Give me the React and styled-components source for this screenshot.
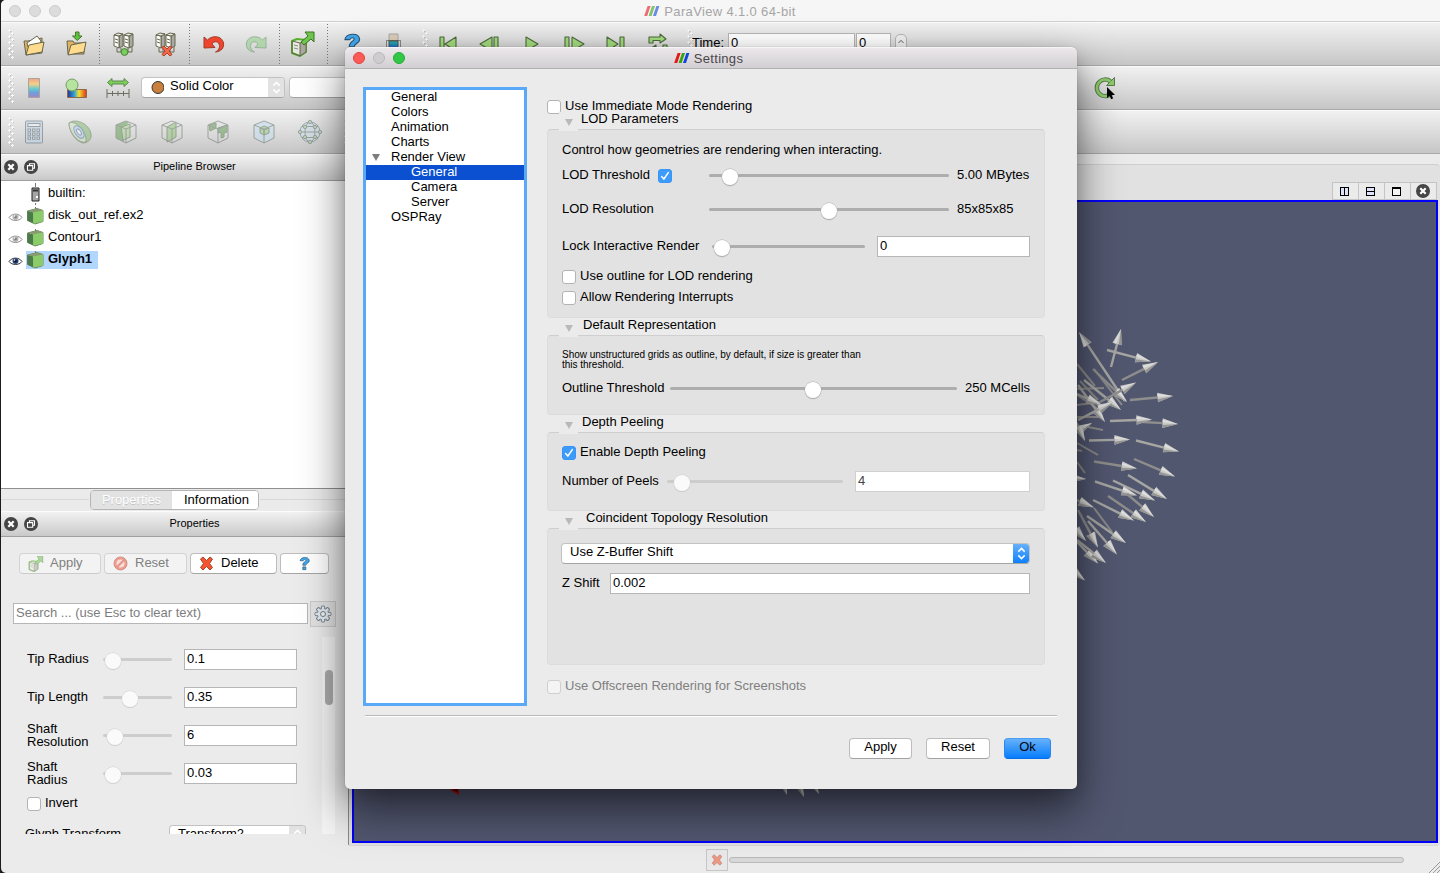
import React from "react";
import styled, { createGlobalStyle, css } from "styled-components";

const GlobalStyle = createGlobalStyle`
  * { box-sizing: border-box; }
  body {
    margin: 0;
    background: #1c1c1c;
    font-family: "Liberation Sans", Arial, sans-serif;
    font-size: 13px;
    line-height: 15px;
    color: #000;
    overflow: hidden;
  }
  svg { display: block; flex: none; }
`;

/* ---------- main window ---------- */
const Desktop = styled.div`
  position: relative;
  width: 1440px;
  height: 873px;
  padding-left: 1px;
  overflow: hidden;
`;
const Window = styled.div`
  display: flex;
  flex-direction: column;
  height: 873px;
  background: #ebebeb;
  border-radius: 5px 0 0 5px;
  overflow: hidden;
`;
const TitleBar = styled.div`
  flex: none;
  display: flex;
  align-items: center;
  height: 22px;
  padding-left: 8px;
  background: #f6f6f6;
  border-bottom: 1px solid #d0d0d0;
`;
const Light = styled.span`
  width: 12px;
  height: 12px;
  margin-right: 8px;
  border-radius: 50%;
  background: ${(p) => p.$c};
  border: 1px solid ${(p) => p.$b};
`;
const TitleText = styled.div`
  flex: 1;
  display: flex;
  justify-content: center;
  gap: 4px;
  padding-top: ${(p) => p.$pt || 0}px;
  padding-right: ${(p) => p.$pad}px;
  color: ${(p) => p.$c};
  letter-spacing: ${(p) => p.$ls || 0}px;
`;
const Toolbar = styled.div`
  flex: none;
  display: flex;
  align-items: center;
  height: 44px;
  background: linear-gradient(#f1f1f1, #dadada 55%, #c6c6c6);
  border-top: 1px solid #fafafa;
  border-bottom: 1px solid #a9a9a9;
`;
const Handle = styled.span`
  flex: none;
  width: 6px;
  height: 30px;
  margin-left: ${(p) => p.$ml ?? 7}px;
  margin-right: ${(p) => p.$mr ?? 0}px;
  background-image: radial-gradient(circle at 1.5px 1.5px, #f8f8f8 1px, transparent 1.4px),
    radial-gradient(circle at 4.5px 4.5px, #f8f8f8 1px, transparent 1.4px),
    radial-gradient(circle at 2.3px 2.3px, #bdbdbd 1px, transparent 1.4px),
    radial-gradient(circle at 5.3px 5.3px, #bdbdbd 1px, transparent 1.4px);
  background-size: 6px 6px;
`;
const ToolButton = styled.span`
  flex: none;
  display: flex;
  justify-content: center;
  align-items: center;
  width: ${(p) => p.$w || 42}px;
  height: 40px;
  margin-left: ${(p) => p.$ml || 0}px;
  opacity: ${(p) => (p.$dim ? 0.5 : 1)};
`;
const Divider = styled.span`
  flex: none;
  width: 1px;
  height: 40px;
  margin: 0 ${(p) => p.$mr ?? 2}px 0 ${(p) => p.$ml ?? 2}px;
  background: repeating-linear-gradient(#777 0 1px, transparent 1px 3px);
`;
const TimeLabel = styled.span`
  width: 36px;
  margin-bottom: 3px;
`;
const Field = styled.div`
  flex: ${(p) => (p.$w ? "none" : 1)};
  width: ${(p) => p.$w}px;
  height: 21px;
  margin-top: ${(p) => p.$mt ?? 2}px;
  margin-left: ${(p) => p.$ml || 0}px;
  padding: 1px 3px 0 2px;
  background: #fff;
  border: 1px solid ${(p) => (p.$dim ? "#d0d0d0" : "#b6b6b6")};
  color: ${(p) => (p.$placeholder ? "#7d7d7d" : p.$dim ? "#444" : "#000")};
`;
const Stepper = styled.span`
  display: flex;
  justify-content: center;
  width: 12px;
  height: 22px;
  margin: 2px 0 0 4px;
  padding-top: 4px;
  border: 1px solid #b5b5b5;
  border-radius: 5px;
  background: #f0f0f0;
`;
const Combo = styled.div`
  flex: ${(p) => (p.$w ? "none" : 1)};
  display: flex;
  align-items: flex-start;
  width: ${(p) => p.$w}px;
  height: 21px;
  margin-top: ${(p) => p.$mt || 0}px;
  margin-left: ${(p) => p.$ml || 0}px;
  padding-left: 8px;
  background: #fff;
  border: 1px solid #c2c2c2;
  border-bottom-color: #a4a4a4;
  border-radius: 4px;
  overflow: hidden;
`;
const ComboText = styled.span`
  flex: 1;
  display: flex;
  gap: 6px;
`;
const ComboArrows = styled.span`
  display: flex;
  align-items: center;
  justify-content: center;
  width: 17px;
  height: 21px;
  margin: -1px -1px -1px 0;
  background: ${(p) => (p.$blue ? "linear-gradient(#6cb3fa, #0a7efd)" : "#e2e2e2")};
`;

const Main = styled.div`
  flex: 1;
  display: flex;
  min-height: 0;
`;
const LeftDock = styled.div`
  flex: none;
  display: flex;
  flex-direction: column;
  width: 344px;
`;
const DockHeader = styled.div`
  flex: none;
  display: flex;
  align-items: center;
  gap: 6px;
  height: ${(p) => p.$h}px;
  padding-left: 3px;
  padding-bottom: ${(p) => p.$pb ?? 1}px;
  background: linear-gradient(#f2f2f2, #c9c9c9);
  border-top: 1px solid #fbfbfb;
  border-bottom: 1px solid #9f9f9f;
  font-size: 11px;
`;
const DockTitle = styled.span`
  flex: 1;
  text-align: center;
  padding-right: ${(p) => p.$pad ?? 0}px;
`;
const Tree = styled.div`
  height: 308px;
  padding-top: 2px;
  background: #fff;
  border-bottom: 1px solid #8f8f8f;
`;
const TreeRow = styled.div`
  display: flex;
  align-items: center;
  height: 22px;
  padding-left: 7px;
`;
const EyeCell = styled.span`
  width: 18px;
  height: 12px;
  padding-top: 2px;
`;
const TreeItem = styled.span`
  display: flex;
  align-items: center;
  gap: 4px;
  height: 18px;
  padding: 0 6px 0 1px;
  ${(p) => p.$selected && css`
    background: #b2d7ff;
    font-weight: bold;
  `}
`;
const TreeText = styled.span`
  margin-bottom: 3px;
`;
const TabRow = styled.div`
  flex: none;
  display: flex;
  align-items: center;
  height: 22px;
`;
const Groove = styled.span`
  width: ${(p) => p.$w}px;
  flex: ${(p) => (p.$w ? "none" : 1)};
  height: 2px;
  border-top: 1px solid #d8d8d8;
`;
const Tabs = styled.div`
  display: flex;
  width: 169px;
  height: 20px;
  margin: 0 1px 0 1px;
  border: 1px solid #b5b5b5;
  border-radius: 4px;
  overflow: hidden;
`;
const Tab = styled.span`
  flex: ${(p) => (p.$on ? "0 0 81px" : 1)};
  height: 19px;
  padding: 1px 0 0 ${(p) => (p.$on ? 0 : 3)}px;
  text-align: center;
  background: ${(p) => (p.$on ? "#e2e2e2" : "#fff")};
  color: ${(p) => (p.$on ? "#fff" : "#000")};
  text-shadow: ${(p) => (p.$on ? "0 1px 0 #c4c4c4" : "none")};
`;
const ActionRow = styled.div`
  flex: none;
  display: flex;
  gap: 3px;
  padding: 16px 0 0 18px;
`;
const Action = styled.span`
  display: flex;
  align-items: center;
  justify-content: ${(p) => (p.$center ? "center" : "flex-start")};
  gap: ${(p) => p.$gap || 6}px;
  width: ${(p) => p.$w}px;
  height: 21px;
  padding: 0 ${(p) => (p.$center ? 0 : 8)}px;
  background: ${(p) => (p.$dim ? "#f3f3f3" : "#fff")};
  color: ${(p) => (p.$dim ? "#808080" : "#000")};
  border: 1px solid ${(p) => (p.$dim ? "#d4d4d4" : "#bdbdbd")};
  border-bottom-color: ${(p) => (p.$dim ? "#cccccc" : "#a6a6a6")};
  border-radius: 4px;
  & > svg { opacity: ${(p) => (p.$dim ? 0.55 : 1)}; }
  & > span { margin-bottom: 3px; }
`;
const SearchRow = styled.div`
  flex: none;
  display: flex;
  align-items: center;
  gap: 2px;
  height: 26px;
  margin: 27px 0 10px;
  padding-left: 12px;
`;
const GearButton = styled.span`
  display: flex;
  align-items: center;
  justify-content: center;
  width: 26px;
  height: 26px;
  background: #e2e2e2;
  border: 1px solid #cacaca;
`;
const ScrollArea = styled.div`
  flex: none;
  display: flex;
  height: 197px;
  overflow: hidden;
`;
const Props = styled.div`
  width: 321px;
  padding: 3px 0 0 26px;
`;
const PropRow = styled.div`
  display: flex;
  align-items: center;
  height: ${(p) => p.$h || 37}px;
  margin-bottom: ${(p) => p.$mb ?? 1}px;
  margin-left: ${(p) => p.$ml || 0}px;
`;
const PropLabel = styled.span`
  width: ${(p) => p.$w || 76}px;
  line-height: 13px;
  white-space: pre-line;
`;
const ScrollTrack = styled.div`
  width: 13px;
  padding: 33px 0 0 3px;
  background: #f4f4f4;
`;
const ScrollThumb = styled.div`
  width: 8px;
  height: 35px;
  border-radius: 4px;
  background: #ababab;
`;

const RightArea = styled.div`
  flex: 1;
  margin-left: 3px;
  padding-top: 10px;
  border-left: 1px solid #8a8a8a;
`;
const LayoutPanel = styled.div`
  display: flex;
  flex-direction: column;
  height: 682px;
  padding: 0 1px 2px 3px;
  background: #e1e1e1;
  border-top: 1px solid #cfcfcf;
  border-bottom: 1px solid #d9d9d9;
  border-radius: 0 4px 4px 0;
`;
const ViewButtons = styled.div`
  display: flex;
  justify-content: flex-end;
  align-items: flex-end;
  height: 35px;
  padding-right: 2px;
`;
const ViewButton = styled.span`
  display: flex;
  align-items: center;
  justify-content: center;
  width: 27px;
  height: 18px;
  margin: 0 0 0 -1px;
  padding-right: 2px;
  border: 1px solid #c4c4c4;
  background: #ebebeb;
`;
const RenderView = styled.div`
  flex: 1;
  margin-right: 1px;
  border: 2px solid #0000fa;
  background: #525770;
  overflow: hidden;
`;
const StatusBar = styled.div`
  flex: none;
  display: flex;
  align-items: center;
  height: 28px;
  padding: 2px 0 0 705px;
`;
const StopButton = styled.span`
  display: flex;
  align-items: center;
  justify-content: center;
  width: 22px;
  height: 22px;
  border: 1px solid #c6c6c6;
  background: #e8e8e8;
  & > svg { opacity: 0.55; }
`;
const Progress = styled.span`
  width: 675px;
  height: 6px;
  margin: 0 25px 0 1px;
  border: 1px solid #b9b9b9;
  border-radius: 3px;
  background: #d8d8d8;
`;
const Grip = styled.span`
  align-self: flex-end;
`;

/* ---------- shared controls ---------- */
const SliderBox = styled.span`
  position: relative;
  flex: ${(p) => (p.$w ? "none" : 1)};
  width: ${(p) => p.$w}px;
  height: 17px;
  margin-top: 2px;
  margin-left: ${(p) => p.$ml || 0}px;
  padding-top: 7px;
`;
const SliderTrack = styled.span`
  display: block;
  height: 3px;
  border-radius: 2px;
  background: ${(p) => (p.$dim ? "#cdcdcd" : "#adadad")};
`;
const SliderThumb = styled.span`
  position: absolute;
  top: 1.5px;
  left: ${(p) => p.$at - 8.3}px;
  width: 16px;
  height: 16px;
  border-radius: 50%;
  background: ${(p) => (p.$dim ? "#fafafa" : "#fff")};
  box-shadow: 0 0 0 0.5px ${(p) => (p.$dim ? "#cfcfcf" : "#b0b0b0")}, 0 1px 1px rgba(0, 0, 0, ${(p) => (p.$dim ? 0.12 : 0.25)});
`;
const Slider = ({ w, ml, at, dim }) => (
  <SliderBox $w={w} $ml={ml}>
    <SliderTrack $dim={dim} />
    <SliderThumb $at={at} $dim={dim} />
  </SliderBox>
);
const Box = styled.span`
  flex: none;
  display: flex;
  align-items: center;
  justify-content: center;
  width: 14px;
  height: 14px;
  margin-top: 3px;
  border-radius: 3px;
  border: 1px solid ${(p) => (p.$on ? "#3a94f4" : p.$dim ? "#cfcfcf" : "#b3b3b3")};
  background: ${(p) => (p.$on ? "#3d9bfb" : p.$dim ? "#f4f4f4" : "#fff")};
`;
const Check = ({ on, dim }) => (
  <Box $on={on} $dim={dim}>
    {on && (
      <svg width="12" height="12" viewBox="0 0 12 12">
        <path d="M2.6 6.6 L4.9 9 L9.3 2.6" fill="none" stroke="#fff" strokeWidth="1.5" strokeLinecap="round" />
      </svg>
    )}
  </Box>
);
const Text = styled.span`
  flex: none;
  width: ${(p) => (p.$w ? p.$w + "px" : "auto")};
  margin-left: ${(p) => p.$ml || 0}px;
  color: ${(p) => (p.$dim ? "#7f7f7f" : "#000")};
  white-space: nowrap;
`;

/* ---------- settings dialog ---------- */
const Dialog = styled.div`
  position: absolute;
  left: 345px;
  top: 47px;
  display: flex;
  flex-direction: column;
  width: 732px;
  height: 742px;
  background: #ebebeb;
  border-radius: 6px 6px 5px 5px;
  box-shadow: 0 0 1px rgba(0, 0, 0, 0.45), 0 20px 44px rgba(0, 0, 0, 0.56), 0 4px 14px rgba(0, 0, 0, 0.1);
`;
const DialogTitle = styled.div`
  display: flex;
  align-items: center;
  height: 22px;
  padding-left: 8px;
  background: linear-gradient(#ebe7eb, #d2cfd2);
  border-top: 1px solid #f6f4f6;
  border-bottom: 1px solid #b3b0b3;
  border-radius: 6px 6px 0 0;
`;
const DialogBody = styled.div`
  display: flex;
  height: 647px;
  margin: 0 20px;
  border-bottom: 1px solid #b9b9b9;
  box-shadow: 0 1px 0 #fff;
`;
const PageList = styled.div`
  flex: none;
  width: 164px;
  height: 619px;
  margin: 18px 20px 0 -2px;
  border: 3px solid #5aa9f8;
  background: #fff;
`;
const PageItem = styled.div`
  display: flex;
  height: 15px;
  line-height: 13px;
  padding-left: ${(p) => 25 + (p.$depth || 0) * 20}px;
  background: ${(p) => (p.$selected ? "#0a50d0" : "transparent")};
  color: ${(p) => (p.$selected ? "#fff" : "#000")};
`;
const OpenMark = styled.span`
  width: 0;
  height: 0;
  margin: 4px 11px 0 -19px;
  border: solid transparent;
  border-width: 7px 4.5px 0;
  border-top-color: ${(p) => p.$c || "#7d7d7d"};
`;
const Page = styled.div`
  width: 498px;
  padding-top: 30px;
`;
const Row = styled.div`
  display: flex;
  align-items: center;
  height: ${(p) => p.$h}px;
  margin-top: ${(p) => p.$mt || 0}px;
`;
const GroupHeader = styled.div`
  position: relative;
  display: flex;
  align-items: flex-start;
  height: 17px;
`;
const Notch = styled.span`
  flex: none;
  width: 19px;
  height: 19px;
  margin-left: 12px;
  padding: 7px 0 0 6px;
  background: #ebebeb;
`;
const NotchMark = styled(OpenMark)`
  display: block;
  margin: 0;
`;
const GroupTitle = styled.span`
  margin: -1px 0 0 ${(p) => p.$x}px;
`;
const GroupBox = styled.div`
  height: ${(p) => p.$h}px;
  padding: ${(p) => p.$pt}px 14px 0;
  background: #e2e2e2;
  border: 1px solid #dcdcdc;
  border-top-color: #cfcfcf;
  border-radius: 4px;
`;
const Note = styled.div`
  width: 330px;
  font-size: 10px;
  line-height: 10px;
  letter-spacing: -0.02px;
`;
const Group = ({ title, x, h, pt, children }) => (
  <section>
    <GroupHeader>
      <Notch><NotchMark $c="#b9b9b9" /></Notch>
      <GroupTitle $x={x}>{title}</GroupTitle>
    </GroupHeader>
    <GroupBox $h={h} $pt={pt}>{children}</GroupBox>
  </section>
);
const DialogButtons = styled.div`
  display: flex;
  justify-content: flex-end;
  gap: 14px;
  padding: 22px 26px 0 0;
`;
const PushButton = styled.span`
  width: ${(p) => p.$w}px;
  height: 21px;
  text-align: center;
  border: 1px solid #bcbcbc;
  border-bottom-color: #a2a2a2;
  border-radius: 4px;
  background: #fff;
  ${(p) => p.$primary && css`
    background: linear-gradient(#66b1fa, #067dfe);
    border-color: #4a9df5 #2a87ef #0a6de8;
  `}
`;

/* ---------- drawings ---------- */
const Logo = ({ dim }) => (
  <svg width="16" height="14" viewBox="0 0 16 14" opacity={dim ? 0.6 : 1}>
    <path d="M3.6 2h3L3.2 12H.2z" fill="#e8141c" />
    <path d="M8 2h3L7.6 12h-3z" fill="#35a313" />
    <path d="M12.4 2h3L12 12H9z" fill="#1144d8" />
  </svg>
);
const Chevrons = ({ c = "#fff" }) => (
  <svg width="9" height="13" viewBox="0 0 9 13" fill="none" stroke={c} strokeWidth="1.5">
    <path d="M1.3 4.6 4.5 1.4 7.7 4.6M1.3 8.4 4.5 11.6 7.7 8.4" />
  </svg>
);
const ink = { stroke: "#66664f", strokeWidth: 1, strokeLinejoin: "round" };
const Folder = ({ arrow }) => (
  <svg width="24" height="26" viewBox="0 0 24 26">
    {arrow
      ? <path d="M3 10h6l1 2h10v11H4z" fill="#e2b35e" {...ink} />
      : <path d="M2 10h4l14-3v15L4 24z" fill="#e2b35e" {...ink} />}
    {!arrow && <path d="M5 12 15 5l4 5-2 6H6z" fill="#fdfdfb" {...ink} />}
    <path d="M4 24 7 14l15-3-2 10z" fill="#ffdc8d" {...ink} />
    {arrow && <path d="M11.500 1h3.500v4h3l-4.700 4.500L8.500 5h3z" fill="#5cc43c" stroke="#46752f" />}
  </svg>
);
const Servers = ({ off }) => (
  <svg width="24" height="26" viewBox="0 0 24 26">
    {[2, 12].map((x) => (
      <g key={x} {...ink}>
        <path d={`M${x + 5} 5l4-2v12l-4 2z`} fill="#a9a9a3" />
        <path d={`M${x} 4l5 1v12l-5-2z`} fill="#fafaf8" />
        <path d={`M${x} 4l4-2 5 1-4 2z`} fill="#e9e9e4" />
        <path d={`M${x + 1} 8l3 1M${x + 1} 11l3 1`} />
      </g>
    ))}
    <path d="M5 17v4h15v-5M9 17v4M16 17v4" fill="none" {...ink} />
    {off
      ? <path d="M8 16.500l2-1.500 3 3 3-3 2 1.500-3 3.500 3 3.500-2 1.500-3-3-3 3-2-1.500 3-3.500z" fill="#f4694c" stroke="#b0402b" />
      : <circle cx="12.500" cy="21" r="3.400" fill="#79cf5b" stroke="#4d813b" />}
  </svg>
);
const Curl = ({ flip, fill, stroke, dim }) => (
  <svg width="24" height="24" viewBox="0 0 24 24" opacity={dim ? 0.55 : 1}>
    <path transform={flip ? "matrix(-1 0 0 1 24 0)" : undefined}
      d="M2 5 5.500 8C10 3 20 3.500 21.500 11c.8 5-2.500 8.500-8 9 4-2 5-6 3-9-2-2-5-1.500-6.500 1L13 15.500 2 16z" fill={fill} stroke={stroke} strokeLinejoin="round" />
  </svg>
);
const BoxOut = ({ s = 26 }) => (
  <svg width={s} height={s} viewBox="0 0 26 26">
    <path d="M2 10l5-2 9 1v12l-6 4-8-3z" fill="#e9e9e4" stroke="#56b02a" strokeWidth="2" strokeLinejoin="round" />
    <path d="M10 12l6-3v12l-6 4z" fill="#a9a9a0" />
    <path d="M2 10l8 2v13M10 12l6-3M2 10v12l8 3 6-4V9" fill="none" {...ink} />
    <path d="M4 14l4 1M4 17l4 1" stroke="#8b8b80" />
    <path d="M15 1h9v10l-3-3-7 6-3-3 7-6z" fill="#6ec64e" stroke="#3f7328" strokeLinejoin="round" />
  </svg>
);
const Question = ({ s = 24 }) => (
  <svg width={s} height={s} viewBox="0 0 22 22">
    <path d="M4.500 7C5 1 17 0 18 6.500c.3 4-5 4-5 7H8.500c0-5 4.500-5 4.500-7 0-2-3.500-1.500-4 .5z" fill="#41a9ee" stroke="#2a5578" strokeLinejoin="round" />
    <path d="M8.500 16h4.500v4H8.500z" fill="#41a9ee" stroke="#2a5578" />
  </svg>
);
const Vcr = ({ d }) => (
  <svg width="22" height="22" viewBox="0 0 22 22">
    <path d={d} fill="#a3dc7e" stroke="#4f6a3d" strokeWidth="1.1" strokeLinejoin="round" />
  </svg>
);
const ClipColor = () => (
  <svg width="18" height="24" viewBox="0 0 18 24">
    <defs>
      <linearGradient id="band" x1="0" y1="0" x2="0" y2="1">
        <stop offset="0" stopColor="#26c0a8" /><stop offset="1" stopColor="#1e5dc8" />
      </linearGradient>
    </defs>
    <path d="M4 2h9v8H4z" fill="#ddcdb8" stroke="#aaa" />
    <path d="M4 9h9v7H4z" fill="url(#band)" stroke="#555" />
    <path d="M1.500 8.500h14v8h-14z" fill="none" stroke="#333" strokeDasharray="1 1" />
  </svg>
);
const ColorMap = () => (
  <svg width="14" height="22" viewBox="0 0 14 22">
    <defs>
      <linearGradient id="map" x1="0" y1="0" x2="0" y2="1">
        <stop offset="0" stopColor="#f3a385" /><stop offset=".3" stopColor="#f3d08a" />
        <stop offset=".55" stopColor="#62cbd0" /><stop offset=".75" stopColor="#6c9fdc" /><stop offset="1" stopColor="#a884c6" />
      </linearGradient>
    </defs>
    <path d="M1.500 1.500h11v19h-11z" fill="url(#map)" stroke="#a9a49d" />
  </svg>
);
const BallMap = () => (
  <svg width="24" height="22" viewBox="0 0 24 22">
    <defs>
      <linearGradient id="ball">
        <stop offset="0" stopColor="#2b2d8f" /><stop offset=".35" stopColor="#2aa0d8" />
        <stop offset=".6" stopColor="#f2e22a" /><stop offset="1" stopColor="#e03020" />
      </linearGradient>
    </defs>
    <path d="M3.500 12.500h19v8h-19z" fill="url(#ball)" stroke="#8a6a4a" />
    <circle cx="8" cy="8" r="6" fill="#b5e3a0" stroke="#76a063" />
  </svg>
);
const Range = () => (
  <svg width="24" height="22" viewBox="0 0 24 22">
    <path d="M1.500 5.500 6 1.500V4h12V1.500l4.500 4L18 9.500V7H6v2.500z" fill="#7ccf5c" stroke="#5d8a49" />
    <path d="M1 12v9M23 12v9M1 16.500h22M6.500 14v5M12 14v5M17.500 14v5" stroke="#6d6d62" fill="none" />
  </svg>
);
const ResetCamera = () => (
  <svg width="24" height="24" viewBox="0 0 24 24">
    <path d="M17.500 5.500A8.300 8.300 0 1 0 19 16.500" fill="none" stroke="#5d7a4c" strokeWidth="4.400" />
    <path d="M13.500 9.500h8V1.500z" fill="#8ccc6c" stroke="#5d7a4c" />
    <path d="M17.500 5.500A8.300 8.300 0 1 0 19 16.500" fill="none" stroke="#8ccc6c" strokeWidth="2.500" />
    <path d="M14 11v11l2.500-2.300 1.700 3.500 2-1-1.700-3.300H22z" fill="#000" />
  </svg>
);
const Calculator = () => (
  <svg width="20" height="24" viewBox="0 0 20 24" stroke="#55636e">
    <rect x="1.500" y="1" width="17" height="22" rx="1" fill="#b9d4ea" />
    <rect x="4" y="3.500" width="12" height="3" fill="#eef6fc" />
    {[9, 13, 17].map((y) => [4, 8.5, 13].map((x) => <rect key={x + "-" + y} x={x} y={y} width="2.500" height="2.300" fill="#eef6fc" />))}
  </svg>
);
const Contour = () => (
  <svg width="26" height="26" viewBox="0 0 26 26">
    <path d="M2 4C8-1 22 4 24 15c1 6-4 9-8 9C8 22 2 12 2 4z" fill="#7fba69" stroke="#5d7350" />
    <path d="M2 4c6-3 18 7 17 19-8 2-17-10-17-19z" fill="#cfe6c3" stroke="#5d7350" />
    <ellipse cx="12" cy="13" rx="4" ry="7" transform="rotate(-35 12 13)" fill="#b6d4ee" stroke="#49719b" />
    <ellipse cx="12" cy="13" rx="1.700" ry="3.500" transform="rotate(-35 12 13)" fill="#fff" stroke="#49719b" />
  </svg>
);
const CubeIcon = ({ kind }) => (
  <svg width="24" height="26" viewBox="0 0 24 26" strokeLinejoin="round">
    {kind === "extract" && <path d="M2 6 12 2l10 4v13l-10 5-10-5z" fill="#c3e0f5" />}
    {kind === "clip" && <><path d="M2 6 11 2l4 1-5 6v14l-8-4z" fill="#5b9d4a" /><path d="M7 8l9-3v13l-7 3z" fill="#a5d18f" stroke="#4f6b42" /></>}
    {kind === "slice" && <path d="M7 8l9-5v15l-9 5z" fill="#8bc573" stroke="#4f6b42" />}
    {kind === "threshold" && <path d="M3 6l7-2v5l-6 3zM12 9l9-3v7l-3 1v4l-3 1v-6l-3 1z" fill="#5b9d4a" stroke="#4f6b42" />}
    {kind === "extract" && <path d="M8 9l4-2 5 2v5l-5 2-4-2zM8 9l4 2 5-2M12 11v5" fill="#94cc79" stroke="#4f6b42" />}
    <path d="M2 6 12 2l10 4v13l-10 5-10-5zM2 6l10 4 10-4M12 10v14" fill="none" stroke="#5e6a60" />
  </svg>
);
const GlyphSphere = () => (
  <svg width="26" height="26" viewBox="0 0 26 26" fill="none" stroke="#5c6f70">
    <circle cx="13" cy="13" r="10" fill="#cfe3ee" />
    <ellipse cx="13" cy="13" rx="5" ry="10" /><path d="M3 13h20M5 7.500h16M5 18.500h16" />
    {[[13, 3], [13, 23], [3, 13], [23, 13], [8, 8], [18, 8], [8, 18], [18, 18]].map(([x, y]) => (
      <circle key={x + "-" + y} cx={x} cy={y} r="1.700" fill="#9ccf85" />
    ))}
  </svg>
);
const CloseBadge = ({ s = 14 }) => (
  <svg width={s} height={s} viewBox="0 0 14 14">
    <circle cx="7" cy="7" r="7" fill="#454545" />
    <path d="M4.300 4.300l5.400 5.400M9.700 4.300 4.300 9.700" stroke="#fff" strokeWidth="2.200" />
  </svg>
);
const FloatBadge = () => (
  <svg width="14" height="14" viewBox="0 0 14 14">
    <circle cx="7" cy="7" r="7" fill="#454545" />
    <path d="M5.500 5V3.700h5v4.500H9M3.500 5.600h5.200v4.600H3.500z" fill="none" stroke="#fff" strokeWidth="1.100" />
  </svg>
);
const Eye = ({ on }) => (
  <svg width="15" height="10" viewBox="0 0 15 10" opacity={on ? 1 : 0.55}>
    <path d="M1 5.500C4 1 11 1 14 5.500 11 9.500 4 9.500 1 5.500z" fill="#fff" stroke="#333" />
    <circle cx="7.500" cy="5" r="3" fill={on ? "#2b467e" : "#777"} />
    <circle cx="7.500" cy="5" r="1.300" fill="#111" />
    <circle cx="6.500" cy="4" r=".8" fill="#fff" />
  </svg>
);
const TreeCube = () => (
  <svg width="17" height="18" viewBox="0 0 17 18">
    <path d="M8.500 0v3" stroke="#777" />
    <path d="M.5 4 10 1.500l6 2V14.500L8 17 .5 13.500z" fill="#7db866" stroke="#6c8a5e" strokeLinejoin="round" />
    <path d="M.5 4 6 5.500V16L.5 13.500z" fill="#4c7b4a" />
    <path d="M.5 4 10 1.500l6 2L6 5.500z" fill="#8a9a72" />
    <path d="M6 5.500l10-2v11L6.500 16.500z" fill="#8bcb6a" />
  </svg>
);
const ServerIcon = () => (
  <svg width="17" height="22" viewBox="0 0 17 22">
    <path d="M8.500 0v4M8.500 20v2" stroke="#777" />
    <path d="M5 5h7v13H5z" fill="#a5a5a5" stroke="#222" />
    <path d="M6 6.500h5v2H6z" fill="#333" /><path d="M9 13h2v2H9z" fill="#fff" />
  </svg>
);
const Cross = ({ s = 15 }) => (
  <svg width={s} height={s} viewBox="0 0 15 15">
    <path d="M1.500 3 4 1l3.500 3.500L11 1l2.500 2-3 4.500 3 4-2.500 2.500-3.500-3.500L4 14l-2.500-2.500 3-4z" fill="#f4552f" stroke="#a5442e" strokeLinejoin="round" />
  </svg>
);
const NoEntry = () => (
  <svg width="15" height="15" viewBox="0 0 15 15">
    <circle cx="7.500" cy="7.500" r="6.500" fill="#f0553a" stroke="#b5422c" />
    <circle cx="7.500" cy="7.500" r="4" fill="#f6d0c8" /><path d="M3.500 11.500l8-8" stroke="#e04a30" strokeWidth="2.200" />
  </svg>
);
const Gear = () => (
  <svg width="18" height="18" viewBox="0 0 18 18">
    {[0, 45, 90, 135].map((r) => (
      <rect key={r} x="7.300" y="1" width="3.400" height="16" rx="1" fill="#e3ebf1" stroke="#74808a" transform={`rotate(${r} 9 9)`} />
    ))}
    <circle cx="9" cy="9" r="5.200" fill="#e3ebf1" />
    <circle cx="9" cy="9" r="2.500" fill="#f5f5f5" stroke="#74808a" />
  </svg>
);
const PaneIcon = ({ kind }) => (
  <svg width="9" height="9" viewBox="0 0 9 9" fill="none" stroke="#000">
    <rect x=".5" y=".5" width="8" height="8" fill={kind === "max" ? "#f4f4f4" : "#dfe3fa"} />
    {kind === "v" && <path d="M4.500 0v9" />}
    {kind === "h" && <path d="M0 4.500h9" />}
    {kind === "max" && <path d="M0 1h9" strokeWidth="2" />}
  </svg>
);

/* Glyph vectors as tail x/y, tip x/y; the plain shafts have their cone hidden behind others. */
const shafts = [
  [1077, 364, 1095, 386], [1094, 369, 1122, 405], [1077, 389, 1104, 388], [1077, 405, 1100, 402],
  [1088, 427, 1103, 430], [1077, 443, 1098, 455], [1077, 462, 1085, 473], [1070, 417, 1100, 417],
  [1077, 450, 1082, 451], [1094, 508, 1112, 532], [1080, 381, 1098, 400], [1077, 395, 1100, 410],
];
const arrows = [
  [1125, 401, 1079, 332], [1111, 367, 1121, 329], [1107, 350, 1151, 361.5], [1122, 380, 1158, 362],
  [1093, 369, 1127, 402], [1084, 380, 1121, 410], [1078, 385, 1105, 422], [1070, 391, 1102, 405],
  [1130, 400, 1173, 396], [1143, 422, 1178, 424], [1110, 421, 1152, 419.5],
  [1089, 440.5, 1130, 439.5], [1136, 440.5, 1179, 451.5], [1094, 461.5, 1137, 468.5], [1134, 459, 1175, 476.5],
  [1113, 480.5, 1155, 500.5], [1095, 481.5, 1137, 495.5], [1128, 475, 1167, 499],
  [1127, 494, 1154, 517], [1108, 496, 1146, 522], [1093, 500, 1134, 520.5],
  [1087, 516, 1126, 543], [1088, 521, 1117, 554.5], [1078, 510, 1098, 547.5],
  [1068, 521, 1086, 541], [1077, 542, 1098, 563.5], [1077, 540, 1106, 563],
  [1070, 568, 1085, 580.5], [1060, 493, 1094, 507.5], [1100, 402, 1136, 382.5], [1078, 420, 1113, 402],
  [1066, 437, 1092, 423], [1074, 418, 1085, 441], [1056, 477, 1086, 479],
  [779, 770, 787, 795], [793, 770, 804, 797], [808, 774, 819, 794],
];
const Arrow = ({ a: [x1, y1, x2, y2], i }) => {
  const len = Math.hypot(x2 - x1, y2 - y1);
  const ux = (x2 - x1) / len, uy = (y2 - y1) / len;
  const bx = x2 - ux * 15.5, by = y2 - uy * 15.5;
  const p = (k) => `${bx - uy * k},${by + ux * k}`;
  const tone = i % 5 > 2;
  return (
    <g>
      <path d={`M${x1} ${y1}L${bx} ${by}`} stroke={tone ? "#8e8e8c" : "#a6a6a2"} strokeWidth="2.400" />
      <polygon points={`${x2},${y2} ${p(4.8)} ${p(-4.8)}`} fill="#c9c9c7" />
      <polygon points={`${x2},${y2} ${p(4.8)} ${p(1.8)}`} fill="#959594" />
      <polygon points={`${x2},${y2} ${p(-1)} ${p(-3.4)}`} fill="#e0e0de" />
    </g>
  );
};
const Scene = () => (
  <svg width="1082" height="639" viewBox="354 202 1082 639">
    {shafts.map(([a, b, c, d], i) => <path key={i} d={`M${a} ${b}L${c} ${d}`} stroke="#8b8b89" strokeWidth="2" />)}
    {arrows.map((a, i) => <Arrow key={i} a={a} i={i} />)}
    <path d="M450 790l9 5V786z" fill="#c00808" /><path d="M452 790l5-1 1 3z" fill="#300" />
  </svg>
);

/* ---------- content ---------- */
const pages = [
  ["General"], ["Colors"], ["Animation"], ["Charts"], ["Render View", 0, "open"],
  ["General", 1, "selected"], ["Camera", 1], ["Server", 1], ["OSPRay"],
];
const sources = [["disk_out_ref.ex2"], ["Contour1"], ["Glyph1", true]];
const glyphProps = [
  ["Tip Radius", 10.5, "0.1"], ["Tip Length", 27.5, "0.35"],
  ["Shaft\nResolution", 12.5, "6"], ["Shaft\nRadius", 10.5, "0.03"],
];
const vcr = [
  "M3 4h4v14H3zM19 4v14L8 11z", "M1 11 13 4v14zM15 4h4v14h-4z", "M5 4l12 7-12 7z",
  "M2 4h4v14H2zM9 4l12 7-12 7z", "M2 4l11 7-11 7zM15 4h4v14h-4z",
  "M2 10V4h11V1l6 5-6 4V7.500H6V10zM20 12v6H9v3l-6-5 6-4v3h7v-3z",
];

const SettingsDialog = () => (
  <Dialog>
    <DialogTitle>
      <Light $c="#fc5b57" $b="#e2443f" />
      <Light $c="#cfcccf" $b="#bcb9bc" />
      <Light $c="#33c748" $b="#24ad36" />
      <TitleText $c="#4a474a" $pad={73} $ls={0.3}><Logo />Settings</TitleText>
    </DialogTitle>
    <DialogBody>
      <PageList>
        {pages.map(([name, depth, state], i) => (
          <PageItem key={i} $depth={depth} $selected={state === "selected"}>
            {state === "open" && <OpenMark />}
            {name}
          </PageItem>
        ))}
      </PageList>
      <Page>
        <Row $h={13}><Check /><Text $ml={4}>Use Immediate Mode Rendering</Text></Row>
        <Group title="LOD Parameters" x={3} h={189} pt={10}>
          <Row $h={19}><Text>Control how geometries are rendering when interacting.</Text></Row>
          <Row $h={31}>
            <Text $w={96}>LOD Threshold</Text><Check on />
            <Slider w={240} ml={37} at={21.5} /><Text $ml={8}>5.00 MBytes</Text>
          </Row>
          <Row $h={37}>
            <Text $w={147}>LOD Resolution</Text>
            <Slider w={240} at={120.5} /><Text $ml={8}>85x85x85</Text>
          </Row>
          <Row $h={37}>
            <Text $w={150}>Lock Interactive Render</Text>
            <Slider w={153} at={10.5} /><Field $ml={12}>0</Field>
          </Row>
          <Row $h={23}><Check /><Text $ml={4}>Use outline for LOD rendering</Text></Row>
          <Row $h={19}><Check /><Text $ml={4}>Allow Rendering Interrupts</Text></Row>
        </Group>
        <Group title="Default Representation" x={5} h={80} pt={14}>
          <Note>Show unstructured grids as outline, by default, if size is greater than<br />this threshold.</Note>
          <Row $h={35}>
            <Text $w={108}>Outline Threshold</Text>
            <Slider w={287} at={143.5} /><Text $ml={8}>250 MCells</Text>
          </Row>
        </Group>
        <Group title="Depth Peeling" x={4} h={79} pt={10}>
          <Row $h={17}><Check on /><Text $ml={4}>Enable Depth Peeling</Text></Row>
          <Row $h={41}>
            <Text $w={105}>Number of Peels</Text>
            <Slider w={176} at={15.5} dim /><Field $ml={12} $dim>4</Field>
          </Row>
        </Group>
        <Group title="Coincident Topology Resolution" x={8} h={137} pt={14}>
          <Row $h={21}>
            <Combo $ml={-1}><ComboText>Use Z-Buffer Shift</ComboText><ComboArrows $blue><Chevrons /></ComboArrows></Combo>
          </Row>
          <Row $h={37}><Text $w={48}>Z Shift</Text><Field>0.002</Field></Row>
        </Group>
        <Row $h={21} $mt={10}><Check dim /><Text $ml={4} $dim>Use Offscreen Rendering for Screenshots</Text></Row>
      </Page>
    </DialogBody>
    <DialogButtons>
      <PushButton $w={63}>Apply</PushButton>
      <PushButton $w={64}>Reset</PushButton>
      <PushButton $w={47} $primary>Ok</PushButton>
    </DialogButtons>
  </Dialog>
);

export default function App() {
  return (
    <Desktop>
      <GlobalStyle />
      <Window>
        <TitleBar>
          {[0, 1, 2].map((i) => <Light key={i} $c="#dcdcdc" $b="#cbcbcb" />)}
          <TitleText $c="#a5a5a5" $pad={69} $pt={2} $ls={0.35}><Logo dim />ParaView 4.1.0 64-bit</TitleText>
        </TitleBar>
        <Toolbar>
          <Handle />
          <ToolButton $w={40}><Folder /></ToolButton><ToolButton $w={43}><Folder arrow /></ToolButton>
          <Divider $mr={3} />
          <ToolButton><Servers /></ToolButton><ToolButton><Servers off /></ToolButton>
          <Divider />
          <ToolButton $w={43}><Curl fill="#f0452c" stroke="#9c3c2a" /></ToolButton>
          <ToolButton><Curl flip fill="#8fcf86" stroke="#5f8f5c" dim /></ToolButton>
          <Divider />
          <ToolButton><BoxOut /></ToolButton>
          <Divider $ml={3} $mr={3} />
          <ToolButton><Question /></ToolButton><ToolButton $w={41}><ClipColor /></ToolButton>
          <Handle $ml={8} $mr={-1} />
          {vcr.map((d, i) => <ToolButton key={i}><Vcr d={d} /></ToolButton>)}
          <Handle $ml={8} $mr={-1} />
          <TimeLabel>Time:</TimeLabel>
          <Field $w={127} $mt={-1}>0</Field><Field $w={35} $ml={1} $mt={-1}>0</Field>
          <Stepper><svg width="6" height="5" viewBox="0 0 6 5"><path d="M.5 4 3 1.300 5.500 4" fill="none" stroke="#666" /></svg></Stepper>
        </Toolbar>
        <Toolbar>
          <Handle />
          <ToolButton $w={40}><ColorMap /></ToolButton><ToolButton $w={44}><BallMap /></ToolButton><ToolButton $w={40}><Range /></ToolButton>
          <Combo $w={144} $ml={3} $mt={-2}>
            <ComboText>
              <svg width="14" height="18" viewBox="0 0 14 18"><circle cx="8" cy="9.500" r="6" fill="#c8803c" stroke="#333" /></svg>
              Solid Color
            </ComboText>
            <ComboArrows><Chevrons /></ComboArrows>
          </Combo>
          <Combo $w={144} $ml={4} $mt={-2} />
          <ToolButton $ml={651}><ResetCamera /></ToolButton>
        </Toolbar>
        <Toolbar>
          <Handle $mr={-3} />
          <ToolButton $w={46} $dim><Calculator /></ToolButton>
          <ToolButton $w={46} $dim><Contour /></ToolButton>
          {["clip", "slice", "threshold", "extract"].map((k) => (
            <ToolButton key={k} $w={46} $dim><CubeIcon kind={k} /></ToolButton>
          ))}
          <ToolButton $w={46} $dim><GlyphSphere /></ToolButton>
          <Handle $ml={11} />
        </Toolbar>
        <Main>
          <LeftDock>
            <DockHeader $h={27} $pb={2}><CloseBadge /><FloatBadge /><DockTitle $pad={-4}>Pipeline Browser</DockTitle></DockHeader>
            <Tree>
              <TreeRow><EyeCell /><TreeItem><ServerIcon /><TreeText>builtin:</TreeText></TreeItem></TreeRow>
              {sources.map(([name, selected]) => (
                <TreeRow key={name}>
                  <EyeCell><Eye on={selected} /></EyeCell>
                  <TreeItem $selected={selected}><TreeCube /><TreeText>{name}</TreeText></TreeItem>
                </TreeRow>
              ))}
            </Tree>
            <TabRow><Groove $w={88} /><Tabs><Tab $on>Properties</Tab><Tab>Information</Tab></Tabs><Groove /></TabRow>
            <DockHeader $h={26}><CloseBadge /><FloatBadge /><DockTitle>Properties</DockTitle></DockHeader>
            <ActionRow>
              <Action $w={82} $dim><BoxOut s={16} /><span>Apply</span></Action>
              <Action $w={83} $dim $gap={7}><NoEntry /><span>Reset</span></Action>
              <Action $w={87} $gap={7}><Cross /><span>Delete</span></Action>
              <Action $w={49} $center><Question s={15} /></Action>
            </ActionRow>
            <SearchRow>
              <Field $w={295} $mt={-2} $placeholder>Search ... (use Esc to clear text)</Field>
              <GearButton><Gear /></GearButton>
            </SearchRow>
            <ScrollArea>
              <Props>
                {glyphProps.map(([label, at, value]) => (
                  <PropRow key={label}>
                    <PropLabel>{label}</PropLabel><Slider w={69} at={at} dim /><Field $w={113} $ml={12}>{value}</Field>
                  </PropRow>
                ))}
                <PropRow $h={21} $mb={0}><Check /><Text $ml={4}>Invert</Text></PropRow>
                <PropRow $h={41} $mb={0} $ml={-2}>
                  <Text $w={144}>Glyph Transform</Text>
                  <Combo $w={137} $mt={4}><ComboText>Transform2</ComboText><ComboArrows><Chevrons /></ComboArrows></Combo>
                </PropRow>
              </Props>
              <ScrollTrack><ScrollThumb /></ScrollTrack>
            </ScrollArea>
          </LeftDock>
          <RightArea>
            <LayoutPanel>
              <ViewButtons>
                {["v", "h", "max"].map((k) => <ViewButton key={k}><PaneIcon kind={k} /></ViewButton>)}
                <ViewButton><CloseBadge /></ViewButton>
              </ViewButtons>
              <RenderView><Scene /></RenderView>
            </LayoutPanel>
          </RightArea>
        </Main>
        <StatusBar>
          <StopButton><Cross s={12} /></StopButton>
          <Progress />
          <Grip><svg width="11" height="11" viewBox="0 0 11 11"><path d="M0 11 11 0M4 11l7-7M8 11l3-3" stroke="#9a9a9a" /></svg></Grip>
        </StatusBar>
      </Window>
      <SettingsDialog />
    </Desktop>
  );
}
